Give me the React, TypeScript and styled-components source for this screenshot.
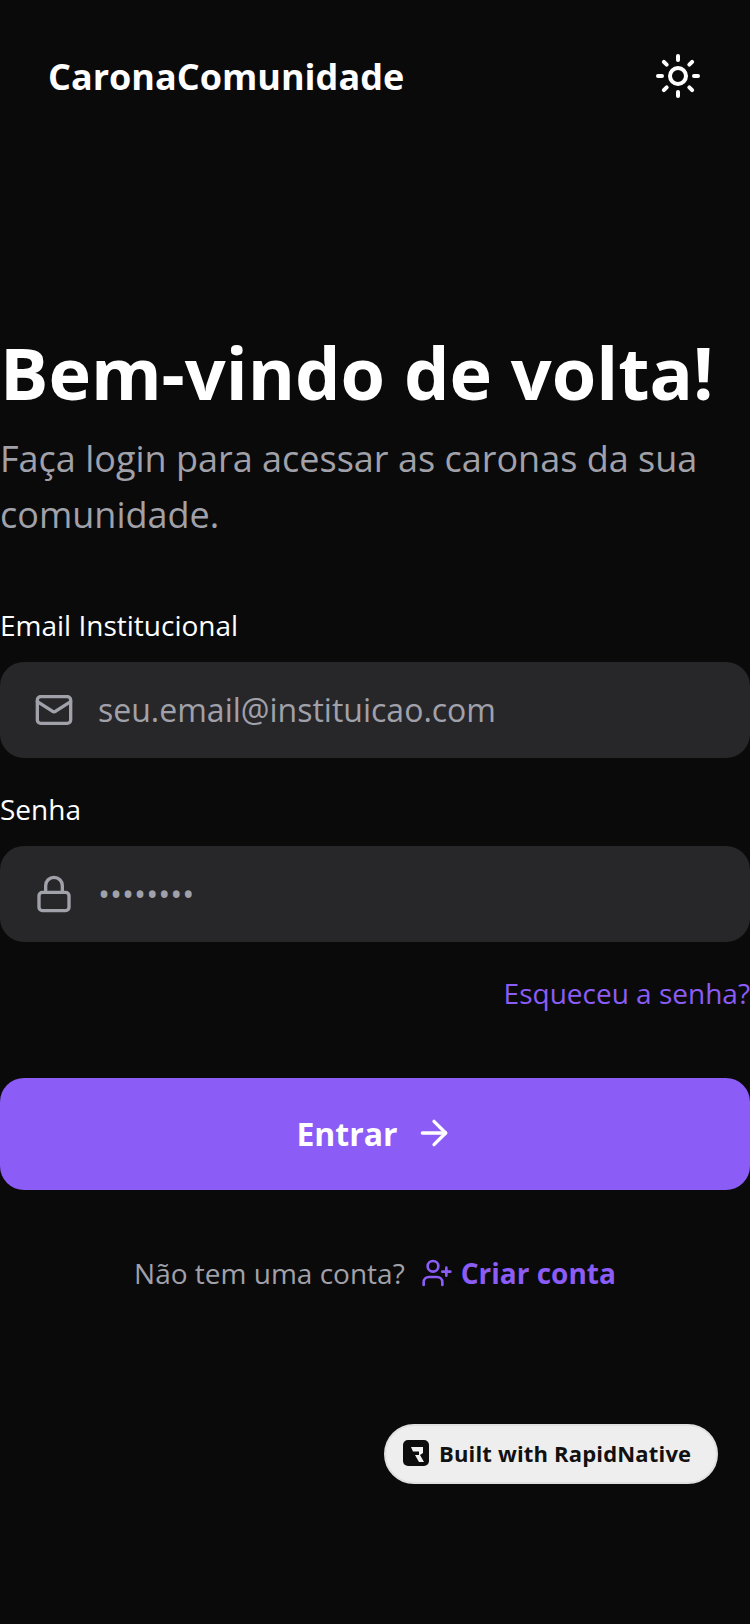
import { ArrowRight, Lock, Mail, Sun, UserPlus } from 'lucide-react';
import styled, { createGlobalStyle } from 'styled-components';

const GlobalStyle = createGlobalStyle`
  html, body {
    margin: 0;
    padding: 0;
    background: #0a0a0b;
  }

  * {
    box-sizing: border-box;
  }
`;

const Page = styled.div`
  position: relative;
  width: 750px;
  height: 1624px;
  overflow: hidden;
  background: #0a0a0b;
  font-family: 'Open Sans', sans-serif;
  color: #ffffff;
`;

const Header = styled.header`
  display: flex;
  justify-content: space-between;
  align-items: center;
  height: 48px;
  margin-top: 52px;
  padding: 0 48px;
`;

const Logo = styled.div`
  padding-top: 2px;
  font-size: 36px;
  font-weight: 700;
  line-height: 48px;
`;

const Main = styled.main`
  display: flex;
  flex-direction: column;
  padding-top: 232px;
`;

const Title = styled.h1`
  margin: 0 0 19px;
  font-size: 72px;
  font-weight: 700;
  line-height: 80px;
  white-space: nowrap;
`;

const Subtitle = styled.p`
  margin: 0 0 62px;
  font-size: 36px;
  line-height: 56px;
  color: #a1a1aa;
`;

const Label = styled.label`
  display: block;
  margin-bottom: 17px;
  font-size: 28px;
  line-height: 40px;
`;

const Field = styled.div`
  display: flex;
  align-items: center;
  gap: 24px;
  height: 96px;
  margin-bottom: 31px;
  padding: 0 34px;
  border-radius: 24px;
  background: #27272a;
  color: #a1a1aa;
`;

const Input = styled.input`
  flex: 1;
  min-width: 0;
  border: 0;
  outline: 0;
  padding: 0 0 2px;
  background: transparent;
  font-family: inherit;
  font-size: 32px;
  color: #ffffff;

  &::placeholder {
    color: #a1a1aa;
    opacity: 1;
  }
`;

const Forgot = styled.a`
  align-self: flex-end;
  font-size: 28px;
  line-height: 40px;
  color: #8b5cf6;
`;

const SubmitButton = styled.button`
  display: flex;
  justify-content: center;
  align-items: center;
  gap: 16px;
  width: 100%;
  height: 112px;
  margin-top: 65px;
  padding: 0 0 2px;
  border: 0;
  border-radius: 24px;
  background: #8b5cf6;
  font-family: inherit;
  font-size: 32px;
  font-weight: 700;
  color: #ffffff;
`;

const SignupRow = styled.div`
  display: flex;
  justify-content: center;
  align-items: center;
  gap: 16px;
  margin-top: 63px;
  font-size: 28px;
  line-height: 40px;
  color: #a1a1aa;
`;

const SignupLink = styled.a`
  display: flex;
  align-items: center;
  gap: 8px;
  font-weight: 700;
  color: #8b5cf6;
`;

const Badge = styled.div`
  position: absolute;
  left: 384px;
  top: 1424px;
  display: flex;
  align-items: center;
  gap: 10px;
  width: 334px;
  height: 60px;
  padding: 0 0 2px 17px;
  border: 2px solid #e0e0e0;
  border-radius: 30px;
  background: #eeeeee;
  font-size: 22px;
  font-weight: 700;
  letter-spacing: 0.17px;
  color: #111111;
`;

const BadgeMark = styled.svg`
  width: 26px;
  height: 26px;
  flex-shrink: 0;
`;

const App = () => {
  return (
    <Page>
      <GlobalStyle />
      <Header>
        <Logo>CaronaComunidade</Logo>
        <Sun size={48} color="#ffffff" />
      </Header>

      <Main>
        <Title>Bem-vindo de volta!</Title>
        <Subtitle>Faça login para acessar as caronas da sua comunidade.</Subtitle>

        <Label htmlFor="email">Email Institucional</Label>
        <Field>
          <Mail size={40} />
          <Input id="email" placeholder="seu.email@instituicao.com" />
        </Field>

        <Label htmlFor="senha">Senha</Label>
        <Field>
          <Lock size={40} />
          <Input id="senha" placeholder="••••••••" />
        </Field>

        <Forgot>Esqueceu a senha?</Forgot>

        <SubmitButton>
          Entrar
          <ArrowRight size={40} />
        </SubmitButton>

        <SignupRow>
          Não tem uma conta?
          <SignupLink>
            <UserPlus size={32} />
            Criar conta
          </SignupLink>
        </SignupRow>
      </Main>

      <Badge>
        <BadgeMark viewBox="0 0 26 26">
          <rect width="26" height="26" rx="5" fill="#0d0d0d" />
          <path d="M8 7h12v6l-3 2 4 7h-5l-4-7h4v-3.500H10z" fill="#f2f2f2" />
        </BadgeMark>
        Built with RapidNative
      </Badge>
    </Page>
  );
};

export default App;
